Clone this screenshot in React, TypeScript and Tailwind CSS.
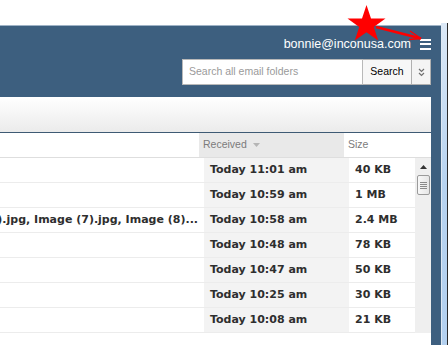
const rows = [
  { subject: "", received: "Today 11:01 am", size: "40 KB" },
  { subject: "", received: "Today 10:59 am", size: "1 MB" },
  { subject: "Image (6).jpg, Image (7).jpg, Image (8)...", received: "Today 10:58 am", size: "2.4 MB" },
  { subject: "", received: "Today 10:48 am", size: "78 KB" },
  { subject: "", received: "Today 10:47 am", size: "50 KB" },
  { subject: "", received: "Today 10:25 am", size: "30 KB" },
  { subject: "", received: "Today 10:08 am", size: "21 KB" },
]

const sans = "font-['Liberation_Sans',Arial,sans-serif]"
const bold = "font-['DejaVu_Sans',Verdana,sans-serif] font-bold text-[11px] text-[#2e2e2e]"

function Header() {
  return (
    <div className="h-[72px] border-t border-[#9fb3c6] pr-[10px] pt-[11px] flex flex-col items-end">
      <div className="h-[14px] flex items-center gap-[9px]">
        <span className={`${sans} text-[12.5px] text-white leading-none`}>bonnie@inconusa.com</span>
        <div className="flex flex-col gap-[2.5px]">
          <div className="w-[11px] h-[2px] bg-white" />
          <div className="w-[11px] h-[2px] bg-white" />
          <div className="w-[11px] h-[2px] bg-white" />
        </div>
      </div>
      <div className={`${sans} mt-[8px] flex h-[26px]`}>
        <div className="w-[181px] bg-white border border-[#b9b9b9] flex items-center pl-[6px] text-[10.5px] text-[#9a9a9a]">
          Search all email folders
        </div>
        <div className="w-[49px] bg-[#f7f7f7] border border-l-0 border-[#b0b0b0] flex items-center justify-center text-[10.5px] text-black">
          Search
        </div>
        <div className="w-[19px] bg-[#f4f4f4] border border-l-0 border-[#b0b0b0] flex items-center justify-center">
          <svg width="7" height="9" viewBox="0 0 7 9" fill="none" stroke="#707070" strokeWidth="1.2">
            <path d="M1 1 L3.5 3.5 L6 1" />
            <path d="M1 5 L3.5 7.5 L6 5" />
          </svg>
        </div>
      </div>
    </div>
  )
}

function Scrollbar() {
  return (
    <div className="w-[16px] h-[175px] bg-[#efefef] flex flex-col items-center">
      <svg width="7" height="4" viewBox="0 0 7 4" className="mt-[7px]">
        <path d="M0 4 L3.5 0 L7 4 Z" fill="#333" />
      </svg>
      <div className="mt-[6px] w-[13px] h-[20px] rounded-[2px] border border-[#9b9b9b] bg-gradient-to-r from-[#f8f8f8] to-[#e6e6e6] flex flex-col items-center justify-center gap-[1px]">
        <div className="w-[7px] h-[1px] bg-[#8a8a8a]" />
        <div className="w-[7px] h-[1px] bg-[#8a8a8a]" />
        <div className="w-[7px] h-[1px] bg-[#8a8a8a]" />
        <div className="w-[7px] h-[1px] bg-[#8a8a8a]" />
      </div>
    </div>
  )
}

function MessageList() {
  return (
    <div className="w-[431px] flex-1 bg-white">
      <div className="h-[36px] bg-gradient-to-b from-white to-[#ebebeb] border-b border-[#3e5a74]" />
      <div className={`${sans} h-[25px] flex border-b border-[#dedede] text-[10.5px] text-[#7b7b7b]`}>
        <div className="w-[199px]" />
        <div className="w-[145px] bg-[#e9e9e9] flex items-center pl-[4px] gap-[6px]">
          Received
          <svg width="7" height="4" viewBox="0 0 7 4">
            <path d="M0 0 L7 0 L3.5 4 Z" fill="#b5b5b5" />
          </svg>
        </div>
        <div className="flex-1 flex items-center pl-[4px]">Size</div>
      </div>
      <div className="flex">
        <div className="w-[415px]">
          {rows.map((r) => (
            <div key={r.received} className={`${bold} h-[25px] flex border-b border-[#ececec] whitespace-nowrap`}>
              <div className="w-[204px] overflow-hidden flex items-center justify-end pr-[6px]">{r.subject}</div>
              <div className="w-[145px] bg-[#f3f3f3] flex items-center pl-[6px]">{r.received}</div>
              <div className="flex-1 flex items-center pl-[6px]">{r.size}</div>
            </div>
          ))}
        </div>
        <Scrollbar />
      </div>
    </div>
  )
}

export default function App() {
  return (
    <div className="relative w-[448px] h-[345px] overflow-hidden bg-white flex">
      <div className="w-[441px] flex flex-col">
        <div className="h-[25px] bg-white" />
        <div className="flex-1 bg-[#3d5f7f] flex flex-col">
          <Header />
          <MessageList />
        </div>
      </div>
      <div className="w-[7px] flex flex-col">
        <div className="h-[23px] bg-white" />
        <div className="flex-1 flex">
          <div className="w-[1px] bg-[#dde8f3]" />
          <div className="flex-1 bg-gradient-to-b from-[#dbe8f6] via-[#b7d3f0] to-[#b3d0ef]" />
          <div className="w-[1px] bg-[#2a2a2a]" />
        </div>
      </div>
      <svg className="absolute inset-0 pointer-events-none" width="448" height="345">
        <polygon
          points="366.5,5 371,18.6 385.5,18.6 373.8,27 378.2,40.5 366.5,32.2 354.8,40.5 359.2,27 347.5,18.6 362,18.6"
          fill="#ff0000"
        />
        <line x1="376" y1="27" x2="421" y2="38.5" stroke="#ff0000" strokeWidth="2.5" />
        <line x1="421" y1="38.5" x2="410" y2="31" stroke="#ff0000" strokeWidth="1.3" />
        <line x1="421" y1="38.5" x2="409" y2="39.5" stroke="#ff0000" strokeWidth="1.3" />
      </svg>
    </div>
  )
}
